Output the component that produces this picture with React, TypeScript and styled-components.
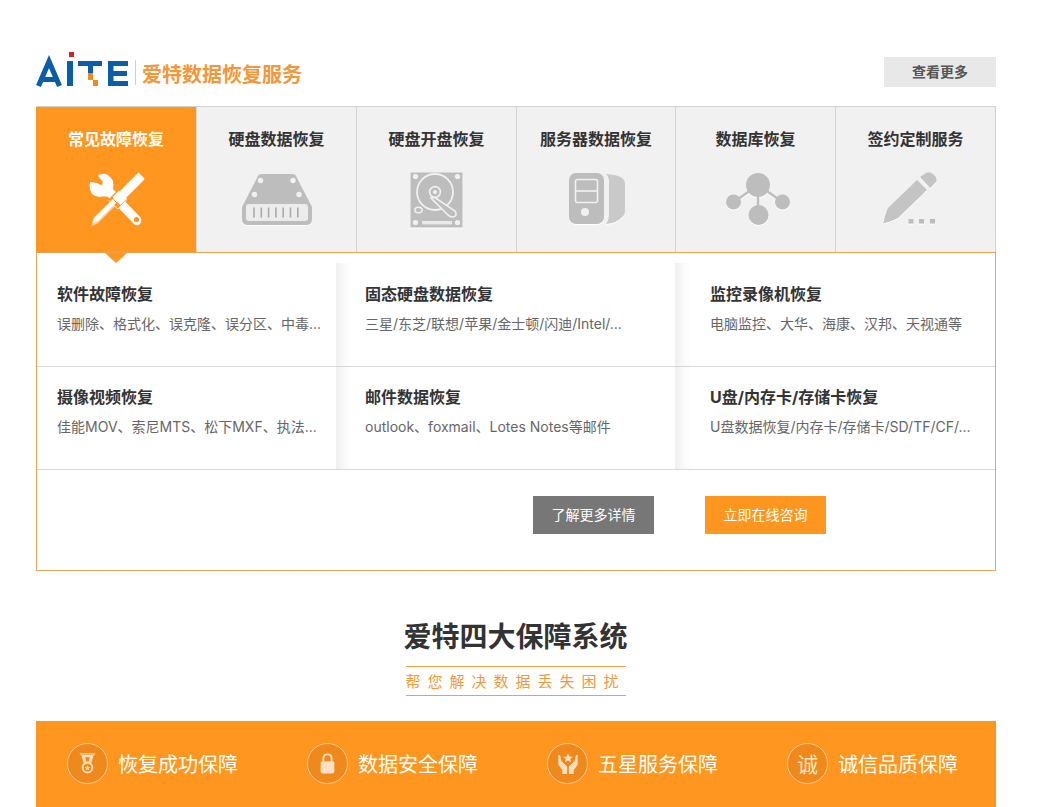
import React from "react";
import styled, { createGlobalStyle } from "styled-components";

const Global = createGlobalStyle`
  html, body { margin: 0; padding: 0; background: #fff; overflow: hidden; }
  body { font-family: "Noto Sans CJK SC", "Liberation Sans", sans-serif; }
  * { box-sizing: border-box; }
`;

const Page = styled.div`
  width: 960px;
  height: 807px;
  margin-left: 36px;
  padding-top: 52px;
  overflow: hidden;
`;

const Header = styled.header`
  display: flex;
  align-items: flex-start;
  height: 54px;
`;

const Brand = styled.div`
  display: flex;
  align-items: flex-start;
  flex: 1;
`;

const BrandName = styled.span`
  margin: 8px 0 0 6px;
  color: #f4973a;
  font-size: 20px;
  line-height: 28px;
  font-weight: 700;
`;

const MoreButton = styled.a`
  display: block;
  width: 112px;
  height: 30px;
  margin-top: 5px;
  background: #e8e8e8;
  color: #555;
  font-size: 14px;
  font-weight: 700;
  line-height: 29px;
  text-align: center;
`;

const Tabs = styled.nav`
  display: grid;
  grid-template-columns: 161px 160px 160px 159px 160px 160px;
  height: 146px;
  border-top: 1px solid #d2d2d2;
`;

const Tab = styled.div<{ $active?: boolean }>`
  display: flex;
  flex-direction: column;
  align-items: center;
  background: ${(p) => (p.$active ? "#fe961f" : "#f1f1f1")};
  border-right: 1px solid ${(p) => (p.$active ? "#d8d8d8" : "#d2d2d2")};
  color: ${(p) => (p.$active ? "#fff" : "#333")};
  padding-top: 19px;
`;

const TabTitle = styled.div`
  font-size: 16px;
  font-weight: 700;
  line-height: 24px;
  white-space: nowrap;
`;

const TabIcon = styled.div<{ $top: number; $shift: number }>`
  display: flex;
  justify-content: center;
  margin-top: ${(p) => p.$top}px;
  margin-left: ${(p) => Math.max(p.$shift, 0) * 2}px;
  margin-right: ${(p) => Math.max(-p.$shift, 0) * 2}px;
  svg { display: block; filter: drop-shadow(0 1px 0 rgba(255,255,255,.9)); }
`;

const Panel = styled.section`
  position: relative;
  height: 319px;
  border: 1px solid #e4a95c;
  border-top-color: #e6a04e;
`;

const Arrow = styled.i`
  position: absolute;
  left: 68px;
  top: 0;
  width: 0;
  height: 0;
  border-left: 11px solid transparent;
  border-right: 11px solid transparent;
  border-top: 10px solid #fe961f;
`;

const Row = styled.div<{ $first?: boolean }>`
  display: grid;
  grid-template-columns: 299px 339px 320px;
  height: ${(p) => (p.$first ? 114 : 103)}px;
  padding-top: ${(p) => (p.$first ? 10 : 0)}px;
  border-bottom: 1px solid #d8d8d8;
`;

const Cell = styled.div<{ $pad: number; $shade?: boolean; $first?: boolean }>`
  padding: ${(p) => (p.$first ? 19 : 18)}px 0 0 ${(p) => p.$pad}px;
  ${(p) =>
    p.$shade
      ? "background: linear-gradient(90deg, #efefef 0, #fafafa 9px, #fff 16px) no-repeat;"
      : ""}
`;

const CellTitle = styled.div`
  color: #333;
  font-family: "Inter", "Noto Sans CJK SC", sans-serif;
  font-size: 16px;
  font-weight: 700;
  line-height: 24px;
  white-space: nowrap;
`;

const CellText = styled.div`
  margin-top: 7px;
  color: #666;
  font-family: "Inter", "Noto Sans CJK SC", sans-serif;
  font-size: 14px;
  line-height: 22px;
  white-space: nowrap;
`;

const Actions = styled.div`
  display: flex;
  gap: 51px;
  padding: 26px 0 0 496px;
`;

const ActionButton = styled.a<{ $tone: string }>`
  display: block;
  width: 121px;
  height: 38px;
  background: ${(p) => p.$tone};
  color: #fff;
  font-size: 14px;
  line-height: 37px;
  text-align: center;
`;

const Section = styled.div`
  display: flex;
  flex-direction: column;
  align-items: center;
  padding: 42px 0 25px;
  margin-left: -1px;
`;

const Heading = styled.h2`
  margin: 0;
  color: #333;
  font-size: 28px;
  font-weight: 700;
  line-height: 44px;
  white-space: nowrap;
`;

const SubHeading = styled.div`
  width: 220px;
  height: 30px;
  margin-top: 9px;
  border-top: 1px solid #efa04a;
  border-bottom: 1px solid #efa04a;
  color: #f09a3e;
  font-size: 15px;
  line-height: 28px;
  letter-spacing: 7px;
  white-space: nowrap;
`;

const Band = styled.div`
  display: grid;
  grid-template-columns: repeat(4, 240px);
  height: 100px;
  background: #fe961f;
`;

const Feature = styled.div`
  display: flex;
  align-items: flex-start;
  gap: 10px;
  padding: 22px 0 0 31px;
`;

const Badge = styled.div`
  display: flex;
  align-items: center;
  justify-content: center;
  width: 41px;
  height: 41px;
  border-radius: 50%;
  background: #f0891b;
  border: 1px solid #fbc98c;
  color: #ffe3c4;
  font-size: 21px;
  line-height: 1;
`;

const FeatureText = styled.span`
  color: #fff;
  font-size: 20px;
  line-height: 42px;
  font-weight: 400;
  white-space: nowrap;
`;

const Logo = () => (
  <svg width="100" height="36" viewBox="0 0 100 36" aria-label="AITE">
    <path d="M2.5 34 L13 9.5 L23.5 34" fill="none" stroke="#0a5ea8" strokeWidth="5.2" />
    <rect x="6" y="25" width="14" height="5" fill="#0a5ea8" />
    <rect x="31" y="9" width="6" height="25" fill="#0a5ea8" />
    <rect x="33" y="0" width="5" height="5" fill="#d9202a" />
    <rect x="42" y="9" width="24" height="5" fill="#0a5ea8" />
    <rect x="52" y="14" width="5" height="7" fill="#0a5ea8" />
    <rect x="52" y="21" width="5" height="7" fill="#f08a1d" />
    <rect x="57" y="28" width="5" height="6" fill="#f08a1d" />
    <path d="M72 34 V9 H92 V14 H77.5 V19 H91 V24 H77.5 V29 H92 V34 Z" fill="#0a5ea8" />
    <rect x="99" y="8" width="1" height="25" fill="#cfcfcf" />
  </svg>
);

const ToolsIcon = () => (
  <svg width="58" height="55" viewBox="0 0 58 55">
    <path d="M9 3 L15 1.5 Q21 3 24 9 Q25 14 23 18 L24 24 L14 23.5 Q7 25 3 21 Q0 16 1 10 L8 11 L13 13.5 L14 9 Z" fill="#fff" />
    <path d="M21 20 L48 48" stroke="#fff" strokeWidth="8.5" strokeLinecap="round" />
    <circle cx="47.5" cy="47.5" r="2.6" fill="#fe961f" />
    <path d="M24 32 L33 23" stroke="#fe961f" strokeWidth="13" />
    <path d="M3 52.5 L4.5 46 L25 25.5 L29 29.5 L9 49.5 Z" fill="#fff" stroke="#fe961f" strokeWidth=".6" />
    <path d="M27.5 29 L34 22.5" stroke="#fff" strokeWidth="11" />
    <path d="M34 22 L52.5 3.5" stroke="#fff" strokeWidth="8.5" />
    <path d="M24.5 27.5 L30 33" stroke="#fe961f" strokeWidth="1" />
  </svg>
);

const DiskIcon = () => (
  <svg width="70" height="52" viewBox="0 0 70 52">
    <path d="M15 4 Q16 0 20 0 H50 Q54 0 55 4 L70 33 V45 Q70 51 64 51 H6 Q0 51 0 45 V33 Z" fill="#bdbdbd" />
    <circle cx="18.5" cy="6.5" r="2.7" fill="#f1f1f1" />
    <circle cx="51" cy="6.5" r="2.7" fill="#f1f1f1" />
    <circle cx="12.5" cy="20.5" r="2.7" fill="#f1f1f1" />
    <circle cx="57" cy="20.5" r="2.7" fill="#f1f1f1" />
    <rect x="4" y="30" width="62" height="17" rx="3" fill="#ececec" />
    <path d="M12 33.5v10M19.3 33.5v10M26.6 33.5v10M33.9 33.5v10M41.2 33.5v10M48.5 33.5v10M55.8 33.5v10" stroke="#a9a9a9" strokeWidth="1.6" />
  </svg>
);

const HddIcon = () => (
  <svg width="53" height="56" viewBox="0 0 53 56">
    <rect x="0.5" y="0.5" width="52" height="55" fill="#bdbdbd" />
    <circle cx="5.5" cy="4.5" r="2.6" fill="#f1f1f1" />
    <circle cx="47.5" cy="4.5" r="2.6" fill="#f1f1f1" />
    <circle cx="5.5" cy="50.5" r="2.6" fill="#f1f1f1" />
    <circle cx="47.5" cy="50.5" r="2.6" fill="#f1f1f1" />
    <circle cx="25" cy="20" r="18" fill="none" stroke="#f1f1f1" strokeWidth="1.8" />
    <circle cx="25" cy="20" r="5.4" fill="#bdbdbd" stroke="#f1f1f1" strokeWidth="1.6" />
    <circle cx="25" cy="20" r="2" fill="#f1f1f1" />
    <path d="M21 26 L25 25.5 L45 39 Q48 44 43 45 Q40 45 38 43 Z" fill="#bdbdbd" stroke="#f1f1f1" strokeWidth="1.6" />
    <ellipse cx="8.5" cy="38" rx="3.6" ry="2.8" fill="none" stroke="#f1f1f1" strokeWidth="1.5" />
    <rect x="12" y="49" width="30" height="3.4" fill="#eaeaea" />
  </svg>
);

const ServerIcon = () => (
  <svg width="57" height="52" viewBox="0 0 57 52">
    <rect x="0" y="0" width="35" height="51" rx="7" fill="#bdbdbd" />
    <rect x="6.5" y="6.5" width="22" height="23" rx="2" fill="none" stroke="#f1f1f1" strokeWidth="1.6" />
    <path d="M6.5 18 H28.5" stroke="#f1f1f1" strokeWidth="1.6" />
    <circle cx="16" cy="39" r="4" fill="#f1f1f1" />
    <path d="M37 1 Q50 2 53 5 Q56 7 56 11 V38 Q56 42 53 44 Q48 50 37 51 Q40 47 40 42 V9 Q40 4 37 1 Z" fill="#c9c9c9" />
  </svg>
);

const NetworkIcon = () => (
  <svg width="65" height="52" viewBox="0 0 65 52">
    <path d="M32 12 L8 29 M32 12 L56.5 29 M32 12 V42" stroke="#bdbdbd" strokeWidth="2.4" />
    <circle cx="32" cy="12" r="12" fill="#bdbdbd" />
    <circle cx="7.5" cy="29" r="7.5" fill="#bdbdbd" />
    <circle cx="56.5" cy="29" r="7.5" fill="#bdbdbd" />
    <circle cx="32.5" cy="42" r="10" fill="#bdbdbd" />
  </svg>
);

const PencilIcon = () => (
  <svg width="55" height="53" viewBox="0 0 55 53">
    <path d="M5 36 L34 8 L44 18 L15 46 Q8 50 0.5 51.5 Q2 42 5 36 Z" fill="#c4c4c4" />
    <path d="M37 5 L43 1 Q46 -1 50 2 Q55 6 53 10 L47 16 Z" fill="#c4c4c4" />
    <rect x="25.5" y="47" width="5" height="4.6" fill="#bdbdbd" />
    <rect x="36" y="47" width="5" height="4.6" fill="#bdbdbd" />
    <rect x="47" y="47" width="5" height="4.6" fill="#bdbdbd" />
  </svg>
);

const MedalIcon = () => (
  <svg width="17" height="21.6" viewBox="0 0 22 28">
    <path d="M1 1 H21 M4 3.5 H18 L15 13 H7 Z" fill="#ffdfbf" stroke="#ffdfbf" strokeWidth="1.6" />
    <path d="M8 5.5 H14 L12.5 11 H9.5 Z" fill="#f0891b" />
    <circle cx="11" cy="19" r="7.5" fill="#ffdfbf" />
    <circle cx="11" cy="19" r="5" fill="#f0891b" />
    <path d="M11 15.5 L12 18 L14.6 18.2 L12.6 19.8 L13.3 22.4 L11 21 L8.7 22.4 L9.4 19.8 L7.4 18.2 L10 18 Z" fill="#ffdfbf" />
  </svg>
);

const LockIcon = () => (
  <svg width="15" height="21" viewBox="0 0 16 23">
    <path d="M3.5 10 V6 Q3.5 1.5 8 1.5 Q12.5 1.5 12.5 6 V10" fill="none" stroke="#ffdfc6" strokeWidth="2" />
    <rect x="0.5" y="9" width="15" height="13.5" rx="2" fill="#ffdfc6" />
  </svg>
);

const HandsIcon = () => (
  <svg width="22" height="22" viewBox="0 0 24 25">
    <path d="M12 0.5 L13.6 4 L17.3 4.4 L14.6 6.8 L15.4 10.5 L12 8.6 L8.6 10.5 L9.4 6.8 L6.7 4.4 L10.4 4 Z" fill="#ffdfbf" />
    <path d="M1 2 L3 2.5 L4.5 9 L11 15.5 V24 H5.5 V19.5 L1 13 Z" fill="#ffdfbf" />
    <path d="M23 2 L21 2.5 L19.5 9 L13 15.5 V24 H18.5 V19.5 L23 13 Z" fill="#ffdfbf" />
  </svg>
);

const tabs = [
  { title: "常见故障恢复", icon: <ToolsIcon />, top: 22, shift: 1.5, active: true },
  { title: "硬盘数据恢复", icon: <DiskIcon />, top: 24, shift: 0 },
  { title: "硬盘开盘恢复", icon: <HddIcon />, top: 22, shift: 0 },
  { title: "服务器数据恢复", icon: <ServerIcon />, top: 23, shift: 1 },
  { title: "数据库恢复", icon: <NetworkIcon />, top: 23, shift: 3 },
  { title: "签约定制服务", icon: <PencilIcon />, top: 22, shift: -5 },
];

const rows = [
  [
    { t: "软件故障恢复", d: "误删除、格式化、误克隆、误分区、中毒..." },
    { t: "固态硬盘数据恢复", d: "三星/东芝/联想/苹果/金士顿/闪迪/Intel/..." },
    { t: "监控录像机恢复", d: "电脑监控、大华、海康、汉邦、天视通等" },
  ],
  [
    { t: "摄像视频恢复", d: "佳能MOV、索尼MTS、松下MXF、执法..." },
    { t: "邮件数据恢复", d: "outlook、foxmail、Lotes Notes等邮件" },
    { t: "U盘/内存卡/存储卡恢复", d: "U盘数据恢复/内存卡/存储卡/SD/TF/CF/..." },
  ],
];

const pads = [20, 29, 35];

const features = [
  { icon: <MedalIcon />, label: "恢复成功保障" },
  { icon: <LockIcon />, label: "数据安全保障" },
  { icon: <HandsIcon />, label: "五星服务保障" },
  { icon: "诚", label: "诚信品质保障" },
];

export default function App() {
  return (
    <Page>
      <Global />
      <Header>
        <Brand>
          <Logo />
          <BrandName>爱特数据恢复服务</BrandName>
        </Brand>
        <MoreButton>查看更多</MoreButton>
      </Header>
      <Tabs>
        {tabs.map((tab) => (
          <Tab key={tab.title} $active={tab.active}>
            <TabTitle>{tab.title}</TabTitle>
            <TabIcon $top={tab.top} $shift={tab.shift}>{tab.icon}</TabIcon>
          </Tab>
        ))}
      </Tabs>
      <Panel>
        <Arrow />
        {rows.map((row, r) => (
          <Row key={r} $first={r === 0}>
            {row.map((cell, c) => (
              <Cell key={cell.t} $pad={pads[c]} $shade={c > 0} $first={r === 0}>
                <CellTitle>{cell.t}</CellTitle>
                <CellText>{cell.d}</CellText>
              </Cell>
            ))}
          </Row>
        ))}
        <Actions>
          <ActionButton $tone="#777">了解更多详情</ActionButton>
          <ActionButton $tone="#fe961f">立即在线咨询</ActionButton>
        </Actions>
      </Panel>
      <Section>
        <Heading>爱特四大保障系统</Heading>
        <SubHeading>帮您解决数据丢失困扰</SubHeading>
      </Section>
      <Band>
        {features.map((f) => (
          <Feature key={f.label}>
            <Badge>{f.icon}</Badge>
            <FeatureText>{f.label}</FeatureText>
          </Feature>
        ))}
      </Band>
    </Page>
  );
}
